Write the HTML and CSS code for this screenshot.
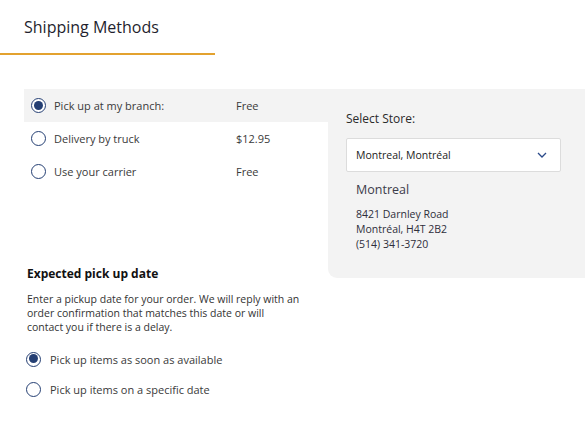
FILE: index.html
```html
<!DOCTYPE html>
<html>
<head>
<meta charset="utf-8">
<link rel="stylesheet" href="styles.css">
</head>
<body>
<div class="page">
  <div class="header">
    <h1 class="title">Shipping Methods</h1>
  </div>
  <div class="methods">
    <div class="options">
      <div class="option selected">
        <span class="radio checked"></span>
        <span class="opt-label">Pick up at my branch:</span>
        <span class="opt-price">Free</span>
      </div>
      <div class="option">
        <span class="radio"></span>
        <span class="opt-label">Delivery by truck</span>
        <span class="opt-price">$12.95</span>
      </div>
      <div class="option">
        <span class="radio"></span>
        <span class="opt-label">Use your carrier</span>
        <span class="opt-price">Free</span>
      </div>
    </div>
    <div class="store-panel">
      <div class="store-label">Select Store:</div>
      <div class="select">
        <span>Montreal, Montréal</span>
        <svg class="chev" width="10" height="6" viewBox="0 0 10 6"><path d="M1 1 L5 5 L9 1" fill="none" stroke="#2b4a8a" stroke-width="1.3"/></svg>
      </div>
      <div class="store-name">Montreal</div>
      <div class="address">
        <div>8421 Darnley Road</div>
        <div>Montréal, H4T 2B2</div>
        <div>(514) 341-3720</div>
      </div>
    </div>
  </div>
  <div class="pickup">
    <h2 class="pickup-title">Expected pick up date</h2>
    <p class="pickup-text">Enter a pickup date for your order. We will reply with an order confirmation that matches this date or will contact you if there is a delay.</p>
    <div class="pick-option first">
      <span class="radio checked"></span>
      <span class="opt-label">Pick up items as soon as available</span>
    </div>
    <div class="pick-option">
      <span class="radio"></span>
      <span class="opt-label">Pick up items on a specific date</span>
    </div>
  </div>
</div>
</body>
</html>
```
FILE: styles.css
```css
* { box-sizing: border-box; }
html, body { margin: 0; padding: 0; background: #fff; }
body {
  font-family: "Open Sans", "DejaVu Sans", sans-serif;
  color: #333;
  width: 585px;
  height: 430px;
  overflow: hidden;
}
.header {
  width: 215px;
  border-bottom: 2px solid #e3a22f;
  padding: 16px 0 15px 24px;
}
.title {
  margin: 0;
  font-size: 16px;
  font-weight: 400;
  line-height: 22px;
  color: #1f1f2e;
}
.methods {
  display: flex;
  margin-top: 34px;
  padding-left: 24px;
}
.options {
  width: 304px;
  display: flex;
  flex-direction: column;
}
.option {
  display: flex;
  align-items: center;
  height: 33px;
  padding-left: 7px;
  font-size: 11px;
}
.option.selected { background: #f3f3f3; }
.radio {
  width: 15px;
  height: 15px;
  border-radius: 50%;
  border: 1.5px solid #253f73;
  background: #fff;
  flex: none;
  position: relative;
}
.radio.checked::after {
  content: "";
  position: absolute;
  left: 1.5px;
  top: 1.5px;
  width: 9px;
  height: 9px;
  border-radius: 50%;
  background: #253f73;
}
.opt-label {
  margin-left: 8px;
  width: 182px;
  color: #3a3a3a;
}
.opt-price { color: #3a3a3a; }
.store-panel {
  width: 257px;
  background: #f3f3f3;
  border-bottom-left-radius: 9px;
  padding: 22px 24px 26px 18px;
}
.store-label {
  font-size: 12px;
  line-height: 16px;
  color: #2a2a2a;
}
.select {
  margin-top: 11px;
  height: 34px;
  background: #fff;
  border: 1px solid #dcdcdc;
  border-radius: 2px;
  display: flex;
  align-items: center;
  justify-content: space-between;
  padding: 0 13px 0 9px;
  font-size: 10.5px;
  color: #222;
}
.store-name {
  margin-top: 10px;
  padding-left: 10px;
  font-size: 12.5px;
  line-height: 16px;
  color: #3c3c4a;
}
.address {
  margin-top: 9px;
  padding-left: 10px;
  font-size: 10.5px;
  line-height: 15px;
  color: #2e2e3a;
}
.pickup {
  padding-left: 27px;
  margin-top: -12px;
}
.pickup-title {
  margin: 0;
  font-size: 12px;
  font-weight: 700;
  line-height: 16px;
  color: #111;
}
.pickup-text {
  margin: 10px 0 0;
  width: 274px;
  font-size: 10.5px;
  line-height: 14px;
  color: #333;
}
.pick-option {
  display: flex;
  align-items: center;
  height: 30px;
  font-size: 11px;
  margin-left: -1px;
}
.pick-option.first { margin-top: 10px; }
.pick-option .opt-label { margin-left: 9px; width: auto; }
```
